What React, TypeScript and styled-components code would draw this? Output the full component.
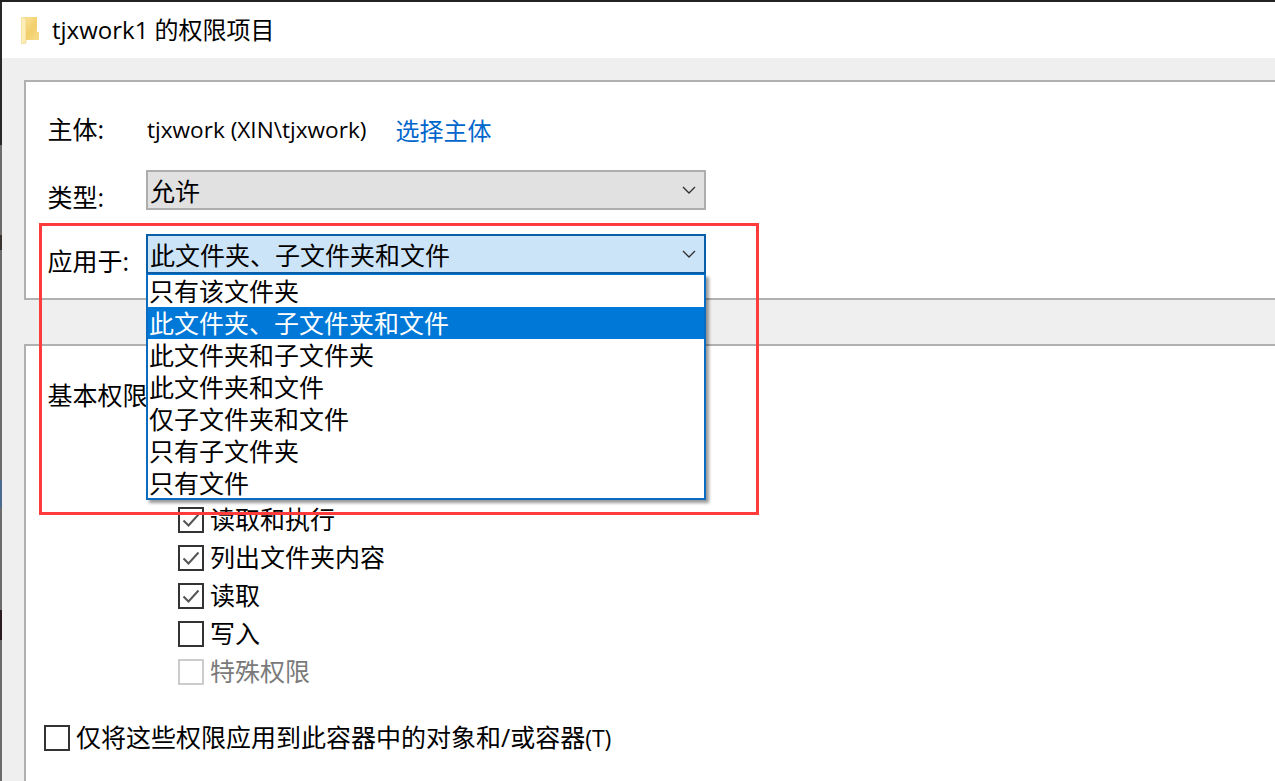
import React from "react";
import styled, { createGlobalStyle } from "styled-components";

const Global = createGlobalStyle`
  html, body { margin: 0; padding: 0; background: #efefef; }
  * { box-sizing: border-box; }
`;

const CJK = `"Open Sans", "Noto Sans CJK SC", sans-serif`;

const Window = styled.div`
  position: relative;
  width: 1275px;
  height: 781px;
  overflow: hidden;
  padding: 2px 0 0 2px;
  background:
    linear-gradient(#222, #222) top / 100% 2px no-repeat,
    linear-gradient(
        #282828 0 145px,
        #6c6c6c 145px 235px,
        #3a3430 235px 250px,
        #6c6c6c 250px 480px,
        #4a6a90 480px 508px,
        #6c6c6c 508px 610px,
        #2a1a22 610px 640px,
        #6c6c6c 640px
      )
      left / 2px 100% no-repeat,
    #efefef;
  font-family: ${CJK};
  font-size: 25px;
  color: #000;
`;

const TitleBar = styled.div`
  height: 56px;
  background: #fff;
  display: flex;
  align-items: center;
  padding-left: 19px;
  gap: 13px;
  font-size: 24px;
`;

const TitleText = styled.span`
  position: relative;
  top: -2px;
`;

const Body = styled.div`
  padding: 22px 0 0 22px;
`;

const Panel = styled.div<{ $h: number; $mb?: number }>`
  height: ${(p) => p.$h}px;
  margin-bottom: ${(p) => p.$mb ?? 0}px;
  background: #fff;
  border: 2px solid #b0b0b0;
  border-right: none;
`;

const Top = styled(Panel)`
  padding: 28px 0 0 21.5px;
`;

const Row = styled.div<{ $h: number; $mt?: number }>`
  display: flex;
  align-items: center;
  height: ${(p) => p.$h}px;
  margin-top: ${(p) => p.$mt ?? 0}px;
`;

const Label = styled.div<{ $drop?: number }>`
  width: 98.5px;
  flex: none;
  line-height: 32px;
  white-space: nowrap;
  padding-top: ${(p) => p.$drop ?? 0}px;
`;

const Value = styled.span`
  margin-left: 1px;
  font-size: 22.6px;
`;

const Link = styled.span`
  margin-left: 29px;
  font-size: 24px;
  color: #0066cc;
`;

const Combo = styled.div<{ $active?: boolean }>`
  width: 560px;
  height: 40px;
  display: flex;
  align-items: center;
  justify-content: space-between;
  padding: 0 8px 0 2px;
  border: 2px solid ${(p) => (p.$active ? "#0a5ea8" : "#adadad")};
  background: ${(p) => (p.$active ? "#cce4f7" : "#e1e1e1")};
`;

const Popup = styled.div`
  position: absolute;
  left: 146px;
  top: 274px;
  width: 560px;
  height: 226px;
  background: #fff;
  border: 2px solid #0a6cc0;
  border-top: 1px solid #0078d7;
  box-shadow: 3px 3px 3px rgba(0, 0, 0, 0.4);
  z-index: 2;
`;

const Option = styled.div<{ $selected?: boolean }>`
  height: 32px;
  line-height: 32px;
  padding-left: 1px;
  white-space: nowrap;
  background: ${(p) => (p.$selected ? "#0078d7" : "transparent")};
  color: ${(p) => (p.$selected ? "#fff" : "#000")};
`;

const Highlight = styled.div`
  position: absolute;
  left: 39px;
  top: 223px;
  width: 720px;
  height: 292px;
  border: 3px solid #ff3b3b;
  z-index: 3;
  pointer-events: none;
`;

const Bottom = styled(Panel)`
  padding: 32px 0 0 21.5px;
`;

const Heading = styled.div`
  line-height: 34px;
`;

const Checks = styled.div`
  display: flex;
  flex-direction: column;
  margin: 89px 0 0 130.5px;
`;

const CheckRow = styled.div<{ $disabled?: boolean }>`
  display: flex;
  align-items: center;
  gap: 6px;
  height: 38px;
  color: ${(p) => (p.$disabled ? "#7a7a7a" : "#000")};
`;

const Box = styled.span<{ $disabled?: boolean }>`
  width: 26px;
  height: 26px;
  flex: none;
  display: flex;
  align-items: center;
  justify-content: center;
  background: #fff;
  border: 2px solid ${(p) => (p.$disabled ? "#cccccc" : "#333333")};
`;

const Inherit = styled.div`
  display: flex;
  align-items: center;
  gap: 6px;
  height: 38px;
  margin: 28px 0 0 -3.5px;
`;

const Caption = styled.span`
  position: relative;
  top: -2px;
`;

const Hotkey = styled.span`
  font-size: 23px;
`;

const Chevron = () => (
  <svg width="14" height="8" viewBox="0 0 14 8" fill="none">
    <path d="M1 1l6 6 6-6" stroke="#333" strokeWidth="1.4" />
  </svg>
);

const Tick = () => (
  <svg width="18" height="14" viewBox="0 0 18 14" fill="none">
    <path d="M1.500 7.500l5 5L16.500 1.500" stroke="#555" strokeWidth="2" />
  </svg>
);

const Folder = () => (
  <svg width="18" height="27" viewBox="0 0 18 27">
    <defs>
      <linearGradient id="fold" x1="0" y1="0" x2="1" y2="1">
        <stop offset="0" stopColor="#fbe6a2" />
        <stop offset="0.55" stopColor="#f2cf6a" />
        <stop offset="1" stopColor="#f7dc8b" />
      </linearGradient>
    </defs>
    <path d="M1 0h15v15l2 0v8H5V2z" fill="url(#fold)" />
    <path d="M0 1l4-1v2l1 0v24l-4 1-1-1z" fill="#fdeeb8" stroke="#e5c66f" strokeWidth="0.5" />
  </svg>
);

const options = [
  "只有该文件夹",
  "此文件夹、子文件夹和文件",
  "此文件夹和子文件夹",
  "此文件夹和文件",
  "仅子文件夹和文件",
  "只有子文件夹",
  "只有文件",
];

const perms: { text: string; checked?: boolean; disabled?: boolean }[] = [
  { text: "读取和执行", checked: true },
  { text: "列出文件夹内容", checked: true },
  { text: "读取", checked: true },
  { text: "写入" },
  { text: "特殊权限", disabled: true },
];

export default function App() {
  return (
    <Window>
      <Global />
      <TitleBar>
        <Folder />
        <TitleText>tjxwork1 的权限项目</TitleText>
      </TitleBar>
      <Body>
        <Top $h={220} $mb={44}>
          <Row $h={38}>
            <Label>主体:</Label>
            <Value>tjxwork (XIN\tjxwork)</Value>
            <Link>选择主体</Link>
          </Row>
          <Row $h={40} $mt={22}>
            <Label $drop={14}>类型:</Label>
            <Combo>
              <span>允许</span>
              <Chevron />
            </Combo>
          </Row>
          <Row $h={40} $mt={24}>
            <Label $drop={14}>应用于:</Label>
            <Combo $active>
              <span>此文件夹、子文件夹和文件</span>
              <Chevron />
            </Combo>
          </Row>
        </Top>
        <Bottom $h={500}>
          <Heading>基本权限:</Heading>
          <Checks>
            {perms.map((p) => (
              <CheckRow key={p.text} $disabled={p.disabled}>
                <Box $disabled={p.disabled}>{p.checked && <Tick />}</Box>
                <Caption>{p.text}</Caption>
              </CheckRow>
            ))}
          </Checks>
          <Inherit>
            <Box />
            <Caption>
              仅将这些权限应用到此容器中的对象和/或容器<Hotkey>(T)</Hotkey>
            </Caption>
          </Inherit>
        </Bottom>
      </Body>
      <Popup>
        {options.map((o, i) => (
          <Option key={o} $selected={i === 1}>
            {o}
          </Option>
        ))}
      </Popup>
      <Highlight />
    </Window>
  );
}
